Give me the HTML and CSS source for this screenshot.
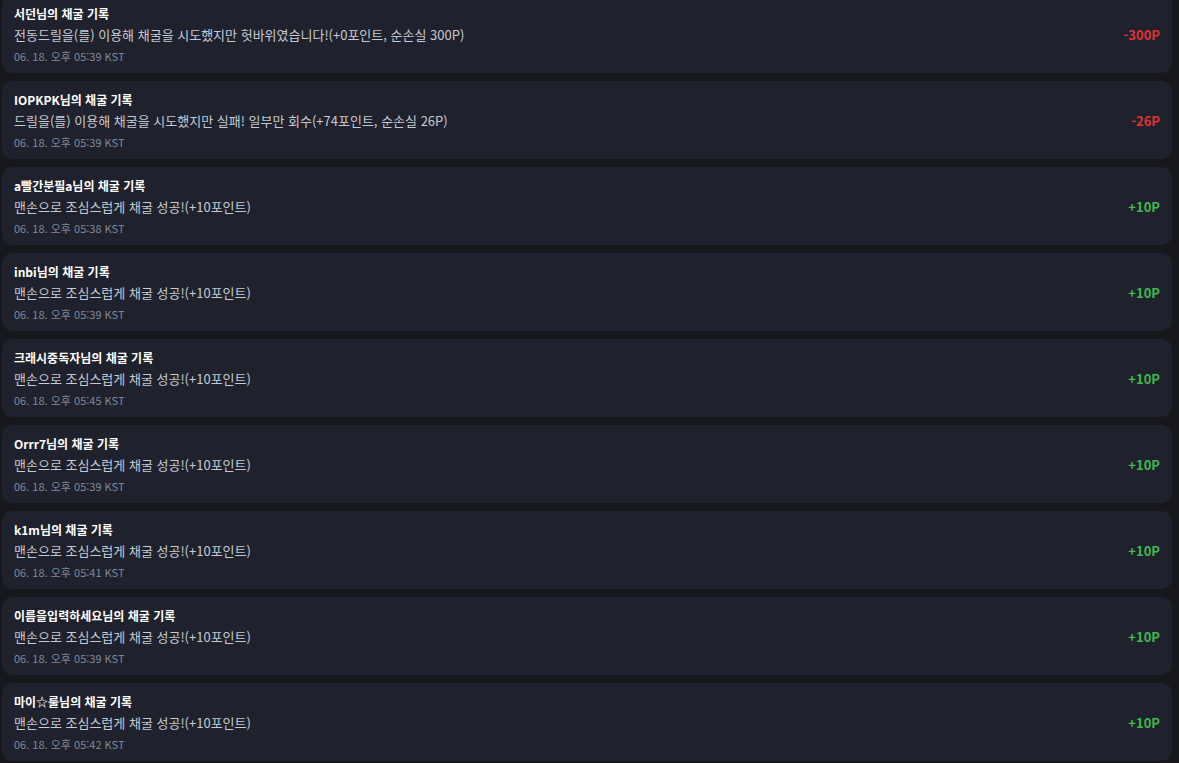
FILE: index.html
```html
<!DOCTYPE html>
<html lang="ko">
<head>
<meta charset="utf-8">
<link rel="stylesheet" href="styles.css">
</head>
<body>
<div class="list">
  <div class="card"><div class="info"><div class="title">서던님의 채굴 기록</div><div class="msg">전동드릴을(를) 이용해 채굴을 시도했지만 헛바위였습니다!(+0포인트, 순손실 300P)</div><div class="time">06. 18. 오후 05:39 KST</div></div><div class="pts neg">-300P</div></div>
  <div class="card"><div class="info"><div class="title">IOPKPK님의 채굴 기록</div><div class="msg">드릴을(를) 이용해 채굴을 시도했지만 실패! 일부만 회수(+74포인트, 순손실 26P)</div><div class="time">06. 18. 오후 05:39 KST</div></div><div class="pts neg">-26P</div></div>
  <div class="card"><div class="info"><div class="title">a빨간분필a님의 채굴 기록</div><div class="msg">맨손으로 조심스럽게 채굴 성공!(+10포인트)</div><div class="time">06. 18. 오후 05:38 KST</div></div><div class="pts pos">+10P</div></div>
  <div class="card"><div class="info"><div class="title">inbi님의 채굴 기록</div><div class="msg">맨손으로 조심스럽게 채굴 성공!(+10포인트)</div><div class="time">06. 18. 오후 05:39 KST</div></div><div class="pts pos">+10P</div></div>
  <div class="card"><div class="info"><div class="title">크래시중독자님의 채굴 기록</div><div class="msg">맨손으로 조심스럽게 채굴 성공!(+10포인트)</div><div class="time">06. 18. 오후 05:45 KST</div></div><div class="pts pos">+10P</div></div>
  <div class="card"><div class="info"><div class="title">Orrr7님의 채굴 기록</div><div class="msg">맨손으로 조심스럽게 채굴 성공!(+10포인트)</div><div class="time">06. 18. 오후 05:39 KST</div></div><div class="pts pos">+10P</div></div>
  <div class="card"><div class="info"><div class="title">k1m님의 채굴 기록</div><div class="msg">맨손으로 조심스럽게 채굴 성공!(+10포인트)</div><div class="time">06. 18. 오후 05:41 KST</div></div><div class="pts pos">+10P</div></div>
  <div class="card"><div class="info"><div class="title">이름을입력하세요님의 채굴 기록</div><div class="msg">맨손으로 조심스럽게 채굴 성공!(+10포인트)</div><div class="time">06. 18. 오후 05:39 KST</div></div><div class="pts pos">+10P</div></div>
  <div class="card"><div class="info"><div class="title">마이☆룰님의 채굴 기록</div><div class="msg">맨손으로 조심스럽게 채굴 성공!(+10포인트)</div><div class="time">06. 18. 오후 05:42 KST</div></div><div class="pts pos">+10P</div></div>
</div>
</body>
</html>
```
FILE: styles.css
```css
html, body {
  margin: 0;
  padding: 0;
  background: #17181c;
  overflow: hidden;
}
body {
  font-family: "Noto Sans CJK KR", "Noto Sans", sans-serif;
}
.list {
  display: flex;
  flex-direction: column;
  gap: 8px;
  margin-top: -5px;
  margin-left: 2px;
  width: 1170px;
}
.card {
  background: #1f222c;
  border-radius: 10px;
  height: 78px;
  box-sizing: border-box;
  padding: 10px 12px 9px 12px;
  display: flex;
  align-items: center;
  justify-content: space-between;
}
.info {
  display: flex;
  flex-direction: column;
  align-self: flex-start;
}
.title {
  font-size: 12px;
  line-height: 18px;
  font-weight: 700;
  color: #ffffff;
}
.msg {
  font-size: 13px;
  line-height: 20px;
  margin-top: 2px;
  color: #c6cad5;
}
.time {
  font-size: 11px;
  line-height: 16px;
  margin-top: 3px;
  color: #7f899c;
}
.pts {
  font-size: 13px;
  font-weight: 700;
}
.neg { color: #e03131; }
.pos { color: #3fb950; }
```
